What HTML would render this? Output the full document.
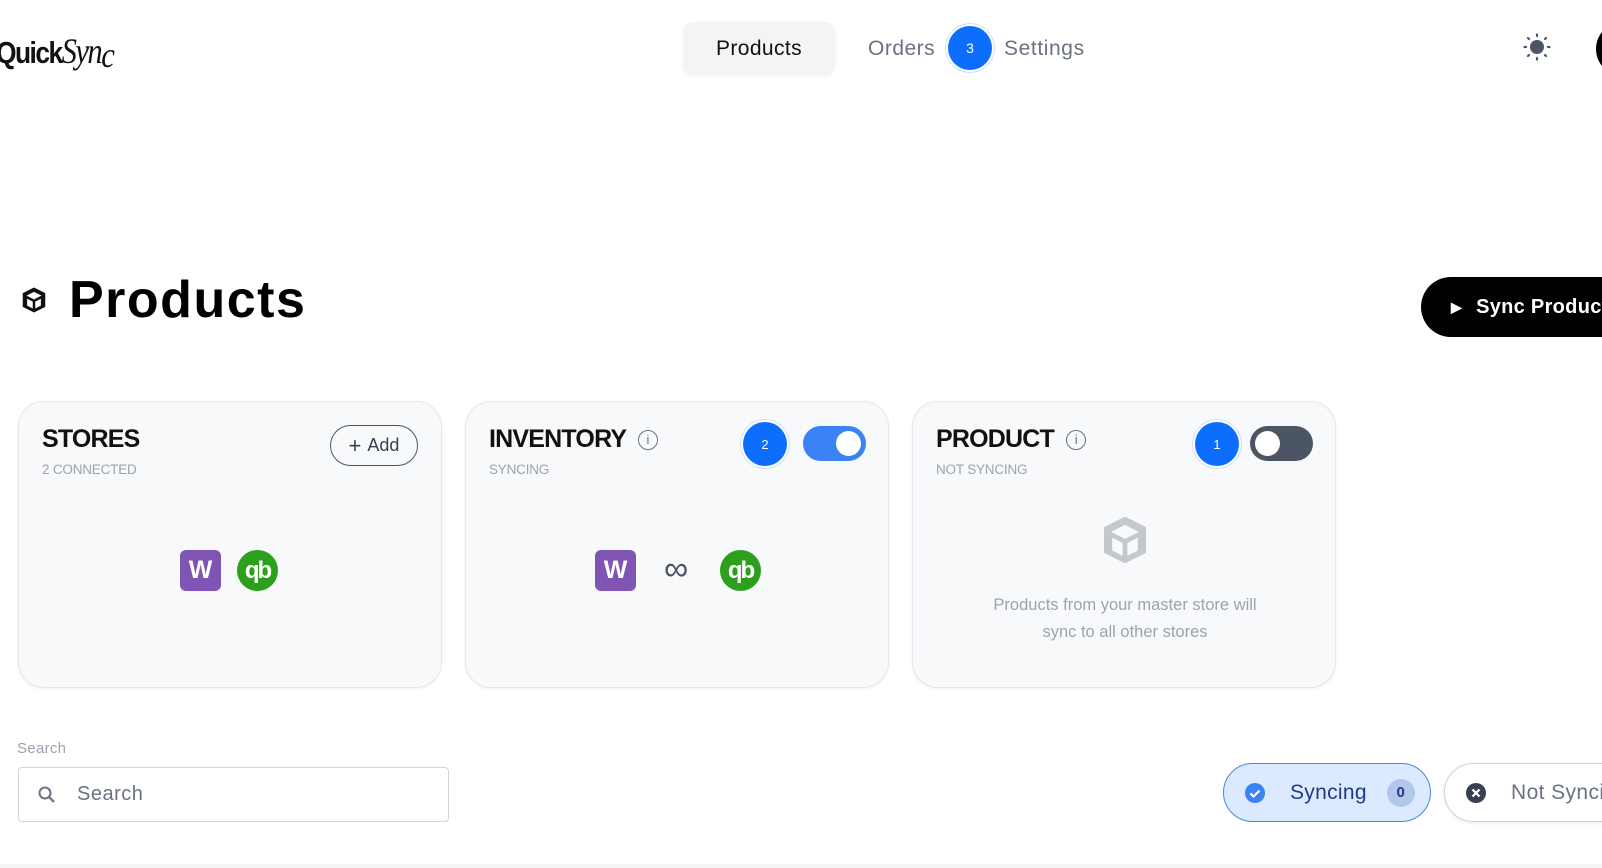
<!DOCTYPE html>
<html><head><meta charset="utf-8"><style>
*{box-sizing:border-box;margin:0;padding:0}
body{width:1602px;height:868px;overflow:hidden;background:#fff;font-family:"Liberation Sans",sans-serif;position:relative}
.a{position:absolute}
.card{position:absolute;top:401px;width:424px;height:287px;background:#f8f9fa;border:1px solid #e5e7eb;border-radius:26px;box-shadow:0 1px 3px rgba(0,0,0,.06)}
.ttl{position:absolute;left:23px;top:23px;font-size:25px;font-weight:bold;color:#111;letter-spacing:-.8px}
.sub{position:absolute;left:23px;top:60px;font-size:13.5px;color:#9ca3af;letter-spacing:-.2px}
.badge{position:absolute;width:44px;height:44px;border-radius:50%;background:#0d6efd;color:#fff;font-size:13px;display:flex;align-items:center;justify-content:center;box-shadow:0 0 0 2px #fff,0 0 0 3px #cfe0ff}
.w{position:absolute;width:41px;height:41px;border-radius:6px;background:#7f54b3;color:#fff;font-weight:bold;font-size:25px;display:flex;align-items:center;justify-content:center}
.qb{position:absolute;width:41px;height:41px;border-radius:50%;background:#2ca01c;color:#fff;font-weight:bold;font-size:24px;display:flex;align-items:center;justify-content:center;letter-spacing:-2px}
</style></head><body>
<div class="a" style="left:-4px;top:30px;font-size:31px;font-weight:bold;color:#111;letter-spacing:-1.8px;transform:scaleX(.85);transform-origin:left">Quick<span style="font-family:'Liberation Serif',serif;font-style:italic;font-weight:normal;font-size:36px">Syn<span style="vertical-align:-4px">c</span></span></div>

<div class="a" style="left:683px;top:22px;width:152px;height:53px;background:#f3f4f6;border-radius:10px;box-shadow:0 1px 3px rgba(0,0,0,.06);font-size:21px;color:#111;display:flex;align-items:center;justify-content:center;letter-spacing:.4px">Products</div>
<div class="a" style="left:868px;top:37px;font-size:21px;color:#6b7280;letter-spacing:.5px">Orders</div>
<div class="badge" style="left:948px;top:26px;font-size:14px">3</div>
<div class="a" style="left:1004px;top:37px;font-size:21px;color:#6b7280;letter-spacing:.6px">Settings</div>

<svg class="a" style="left:1523px;top:33px" width="28" height="28" viewBox="0 0 28 28"><circle cx="14" cy="14" r="7" fill="#4b5563"/><g stroke="#4b5563" stroke-width="2.2" stroke-linecap="round"><path d="M14 1.5v1.5M14 25v1.5M1.5 14h1.5M25 14h1.5M5 5l1 1M22 22l1 1M5 23l1-1M22 6l1-1"/></g></svg>
<div class="a" style="left:1596px;top:22px;width:54px;height:54px;border-radius:50%;background:#000"></div>

<svg class="a" style="left:19px;top:285px" width="30" height="30" viewBox="0 0 24 24"><path d="M12 2L3 6.5v11L12 22l9-4.5v-11z" fill="#111"/><path d="M12 5.5L6 8.5l6 3 6-3z M6.5 11v5.5l4.5 2.3v-5.5z M13 13.3v5.5l4.5-2.3V11z" fill="#fff"/></svg>
<div class="a" style="left:69px;top:270px;font-size:52px;font-weight:bold;color:#000;letter-spacing:1.5px">Products</div>

<div class="a" style="left:1421px;top:277px;width:240px;height:60px;border-radius:30px;background:#000;color:#fff;font-size:20px;font-weight:bold;display:flex;align-items:center;padding-left:30px;letter-spacing:.3px"><span style="font-size:14px;margin-right:14px">▶</span>Sync Products</div>

<div class="card" style="left:18px">
<div class="ttl">STORES</div><div class="sub">2 CONNECTED</div>
<div class="a" style="left:311px;top:23px;width:88px;height:41px;border:1.5px solid #4b5563;border-radius:21px;font-size:18px;color:#374151;display:flex;align-items:center;justify-content:center"><span style="font-size:22px;margin-right:6px;font-weight:300">+</span>Add</div>
<div class="w" style="left:161px;top:148px">W</div>
<div class="qb" style="left:218px;top:148px">qb</div>
</div>

<div class="card" style="left:465px">
<div class="ttl">INVENTORY <span style="display:inline-block;width:20px;height:20px;border:1.5px solid #6b7280;border-radius:50%;font-size:13px;color:#6b7280;text-align:center;line-height:17px;vertical-align:3px;margin-left:6px;font-weight:normal;letter-spacing:0">i</span></div>
<div class="sub">SYNCING</div>
<div class="badge" style="left:277px;top:20px">2</div>
<div class="a" style="left:337px;top:24px;width:63px;height:35px;border-radius:18px;background:#3b82f6"><div class="a" style="right:5px;top:5px;width:25px;height:25px;border-radius:50%;background:#fff"></div></div>
<div class="w" style="left:129px;top:148px">W</div>
<div class="a" style="left:198px;top:148px;font-size:34px;color:#4b5563">∞</div>
<div class="qb" style="left:254px;top:148px">qb</div>
</div>

<div class="card" style="left:912px">
<div class="ttl">PRODUCT <span style="display:inline-block;width:20px;height:20px;border:1.5px solid #6b7280;border-radius:50%;font-size:13px;color:#6b7280;text-align:center;line-height:17px;vertical-align:3px;margin-left:6px;font-weight:normal;letter-spacing:0">i</span></div>
<div class="sub">NOT SYNCING</div>
<div class="badge" style="left:282px;top:20px">1</div>
<div class="a" style="left:337px;top:24px;width:63px;height:35px;border-radius:18px;background:#4b5563"><div class="a" style="left:5px;top:5px;width:25px;height:25px;border-radius:50%;background:#fff"></div></div>
<svg class="a" style="left:184px;top:110px" width="56" height="56" viewBox="0 0 24 24"><path d="M12 2L3 6.5v11L12 22l9-4.5v-11z" fill="#c4c7cc"/><path d="M12 5.5L6 8.5l6 3 6-3z M6.5 11v5.5l4.5 2.3v-5.5z M13 13.3v5.5l4.5-2.3V11z" fill="#f8f9fa"/></svg>
<div class="a" style="left:0;width:424px;top:190px;text-align:center;font-size:16.5px;line-height:27px;color:#9ca3af">Products from your master store will<br>sync to all other stores</div>
</div>

<div class="a" style="left:17px;top:740px;font-size:15px;color:#9ca3af;letter-spacing:.3px">Search</div>
<div class="a" style="left:18px;top:767px;width:431px;height:55px;border:1.5px solid #d1d5db;border-radius:4px;display:flex;align-items:center;padding-left:18px;font-size:20px;color:#6b7280;letter-spacing:.5px">
<svg width="20" height="20" viewBox="0 0 20 20" style="margin-right:20px"><circle cx="8" cy="8" r="5.5" fill="none" stroke="#6b7280" stroke-width="2"/><path d="M12 12l5 5" stroke="#6b7280" stroke-width="2.2"/></svg>Search</div>

<div class="a" style="left:1223px;top:763px;width:208px;height:59px;border:1.5px solid #4a86e0;border-radius:30px;background:#dbeafe;display:flex;align-items:center;padding-left:20px;font-size:21px;color:#1e3a8a;letter-spacing:.3px">
<svg width="22" height="22" viewBox="0 0 22 22" style="margin-right:24px"><circle cx="11" cy="11" r="10" fill="#3b82f6"/><path d="M6.5 11.5l3 3 6-6" fill="none" stroke="#fff" stroke-width="2.2"/></svg>Syncing
<span style="display:inline-block;width:28px;height:28px;border-radius:50%;background:#b3c7ea;font-size:15px;font-weight:bold;text-align:center;line-height:28px;margin-left:20px;color:#1e3a8a">0</span></div>
<div class="a" style="left:1444px;top:763px;width:240px;height:59px;border:1.5px solid #d1d5db;border-radius:30px;background:#fff;display:flex;align-items:center;padding-left:20px;font-size:21px;color:#6b7280;box-shadow:0 1px 3px rgba(0,0,0,.1);letter-spacing:.4px">
<svg width="22" height="22" viewBox="0 0 22 22" style="margin-right:24px"><circle cx="11" cy="11" r="10" fill="#374151"/><path d="M7.5 7.5l7 7M14.5 7.5l-7 7" stroke="#fff" stroke-width="2.2"/></svg>Not Syncing</div>
<div class="a" style="left:0;top:864px;width:1602px;height:4px;background:#f3f4f6"></div>
</body></html>
